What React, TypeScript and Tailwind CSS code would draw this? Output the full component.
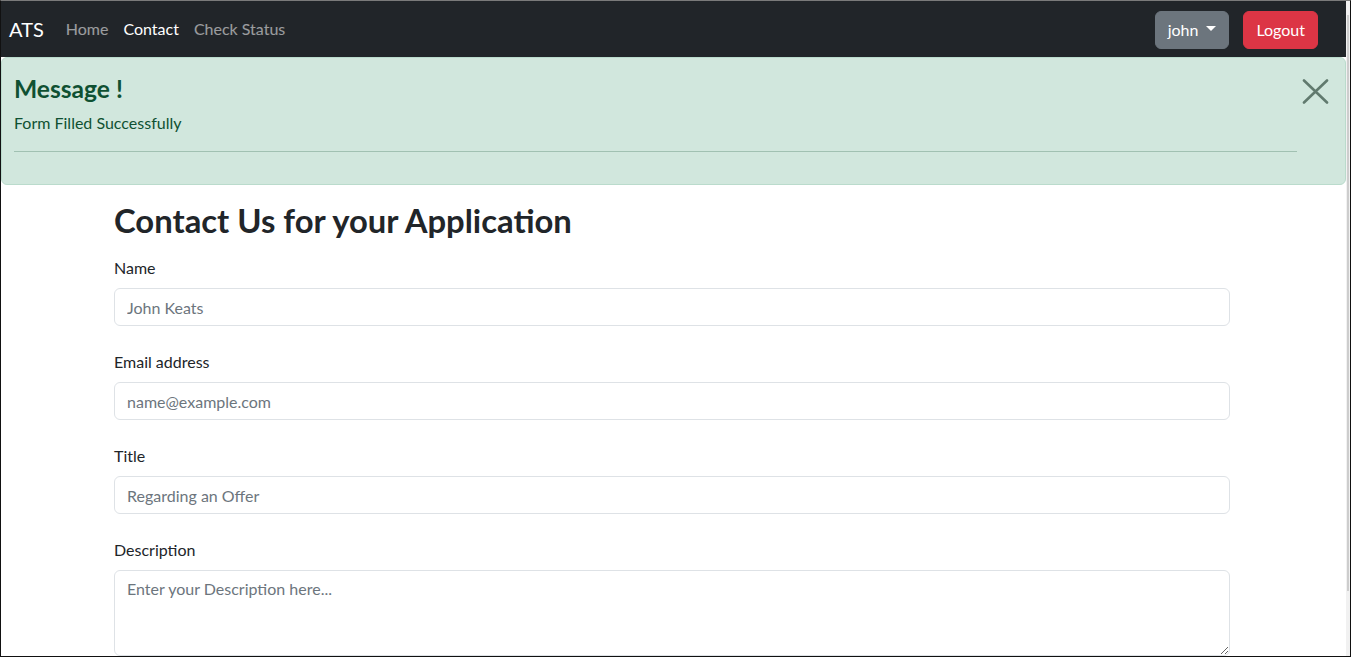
export default function App() {
  return (
    <div
      className="w-[1351px] h-[657px] overflow-hidden flex bg-white border border-[#111] border-t-[#7a7a7a]"
      style={{ fontFamily: 'Lato, "Noto Sans", sans-serif' }}
    >
      <div className="flex-1 min-w-0 flex flex-col">
        {/* Navbar */}
        <nav className="h-[56px] shrink-0 bg-[#212529] flex items-center pl-[8px] pr-[28px]">
          <a className="text-[20px] leading-[30px] text-white mr-[14px]">ATS</a>
          <ul className="flex items-center text-[16px] leading-[24px]">
            <li><a className="pl-[8px] pr-[7px] py-[8px] text-white/55">Home</a></li>
            <li><a className="pl-[8px] pr-[7px] py-[8px] text-white">Contact</a></li>
            <li><a className="pl-[8px] pr-[7px] py-[8px] text-white/55">Check Status</a></li>
          </ul>
          <div className="ml-auto flex items-center gap-[14px] pt-[1px]">
            <button className="h-[38px] px-[12px] rounded-[6px] bg-[#6c757d] border border-[#6c757d] text-white text-[16px] leading-[24px] flex items-center">
              john
              <span className="ml-[8px] w-0 h-0 border-t-[5px] border-t-white border-x-[5px] border-x-transparent mt-[-2px]" />
            </button>
            <button className="h-[38px] px-[12px] rounded-[6px] bg-[#dc3545] border border-[#dc3545] text-white text-[16px] leading-[24px]">
              Logout
            </button>
          </div>
        </nav>

        {/* Alert */}
        <div className="relative shrink-0 bg-[#d1e7dd] border border-[#badbcc] rounded-[6px] text-[#0f5132] pt-[16px] pl-[12px] pr-[48px] pb-[16px]">
          <h4 className="text-[24.6px] leading-[30px] font-bold mb-[7px]">Message !</h4>
          <p className="text-[16px] leading-[24px]">Form Filled Successfully</p>
          <hr className="my-[16px] border-0 border-t border-t-[#a1c1b2]" />
          <button className="absolute top-[21px] right-[16px] w-[27px] h-[25px] flex items-center justify-center" aria-label="Close">
            <svg width="27" height="25" viewBox="0 0 27 25">
              <path d="M2 1.5 L25 23.5 M25 1.5 L2 23.5" stroke="#617a6e" strokeWidth="2.6" strokeLinecap="round" />
            </svg>
          </button>
        </div>

        {/* Content */}
        <div className="pl-[113px] pt-[16px]">
          <div className="w-[1116px]">
            <h2 className="text-[32.8px] leading-[40px] font-bold text-[#212529] mb-[15px]">
              Contact Us for your Application
            </h2>
            <form className="text-[#212529]">
              <div className="mb-[24px]">
                <label className="block text-[16px] leading-[24px] mb-[8px]">Name</label>
                <input
                  className="block w-full h-[38px] px-[12px] text-[16px] leading-[24px] border border-[#dee2e6] rounded-[6px] placeholder:text-[#6c757d] outline-none"
                  placeholder="John Keats"
                />
              </div>
              <div className="mb-[24px]">
                <label className="block text-[16px] leading-[24px] mb-[8px]">Email address</label>
                <input
                  className="block w-full h-[38px] px-[12px] text-[16px] leading-[24px] border border-[#dee2e6] rounded-[6px] placeholder:text-[#6c757d] outline-none"
                  placeholder="name@example.com"
                />
              </div>
              <div className="mb-[24px]">
                <label className="block text-[16px] leading-[24px] mb-[8px]">Title</label>
                <input
                  className="block w-full h-[38px] px-[12px] text-[16px] leading-[24px] border border-[#dee2e6] rounded-[6px] placeholder:text-[#6c757d] outline-none"
                  placeholder="Regarding an Offer"
                />
              </div>
              <div className="mb-[24px]">
                <label className="block text-[16px] leading-[24px] mb-[8px]">Description</label>
                <textarea
                  rows={3}
                  className="block w-full h-[86px] px-[12px] py-[6px] text-[16px] leading-[24px] border border-[#dee2e6] rounded-[6px] placeholder:text-[#6c757d] outline-none"
                  placeholder="Enter your Description here..."
                />
              </div>
            </form>
          </div>
        </div>
      </div>

      {/* Scrollbar */}
      <div className="relative w-[4px] shrink-0 bg-[#f1f1f1]">
        <div className="absolute left-[1px] top-[14px] w-[2px] h-[576px] bg-[#cdcdcd]" />
      </div>
    </div>
  );
}
